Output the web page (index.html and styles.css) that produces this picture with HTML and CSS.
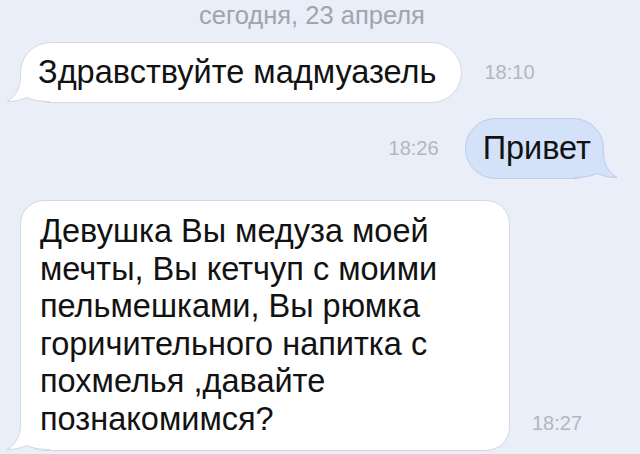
FILE: index.html
```html
<!DOCTYPE html>
<html>
  <head>
    <title>
      Сообщения
    </title>

    <link rel="stylesheet" href="styles.css">

  </head>

  <body>
    <div class="chat">
      <p class="date">сегодня, 23 апреля</p>

      <div class="row row-in">
        <div class="bubble bubble-in">
          <svg class="tail tail-in" width="46" height="27" viewBox="0 0 46 27">
            <path class="tail-fill" d="M14.5 0 C14.5 12 10 20 1 25.5 C8 25.8 15 24 21 21.5 C26 24 34 25.5 44 25.5 L44 0 Z"/>
            <path class="tail-line" d="M14.5 0 C14.5 12 10 20 1 25.5 C8 25.8 15 24 21 21.5 C26 24 34 25.5 44 25.5"/>
          </svg>
          <span class="bubble-text">Здравствуйте мадмуазель</span>
        </div>
        <span class="time">18:10</span>
      </div>

      <div class="row row-out">
        <span class="time">18:26</span>
        <div class="bubble bubble-out">
          <svg class="tail tail-out" width="46" height="27" viewBox="0 0 46 27">
            <path class="tail-fill" d="M14.5 0 C14.5 12 10 20 1 25.5 C8 25.8 15 24 21 21.5 C26 24 34 25.5 44 25.5 L44 0 Z"/>
            <path class="tail-line" d="M14.5 0 C14.5 12 10 20 1 25.5 C8 25.8 15 24 21 21.5 C26 24 34 25.5 44 25.5"/>
          </svg>
          <span class="bubble-text">Привет</span>
        </div>
      </div>

      <div class="row row-in row-long">
        <div class="bubble bubble-in bubble-long">
          <svg class="tail tail-in" width="46" height="27" viewBox="0 0 46 27">
            <path class="tail-fill" d="M14.5 0 C14.5 12 10 20 1 25.5 C8 25.8 15 24 21 21.5 C26 24 34 25.5 44 25.5 L44 0 Z"/>
            <path class="tail-line" d="M14.5 0 C14.5 12 10 20 1 25.5 C8 25.8 15 24 21 21.5 C26 24 34 25.5 44 25.5"/>
          </svg>
          <span class="bubble-text">
            Девушка Вы медуза моей<br>
            мечты, Вы кетчуп с моими<br>
            пельмешками, Вы рюмка<br>
            горичительного напитка с<br>
            похмелья ,давайте<br>
            познакомимся?
          </span>
        </div>
        <span class="time time-bottom">18:27</span>
      </div>
    </div>
  </body>
</html>
```

FILE: styles.css
```css
body {
  margin: 0;
  height: 454px;
  overflow: hidden;
  background-color: #e9eef8;
  font-family: "Liberation Sans", Arial, sans-serif;
  color: #121212;
}

.chat {
  display: flex;
  flex-direction: column;
  padding: 0 36px 0 20px;
}

.date {
  margin: 0 0 12px 0;
  font-size: 25.5px;
  line-height: 30px;
  text-align: center;
  color: #a0a4ac;
}

.row {
  display: flex;
  flex-direction: row;
  align-items: center;
  gap: 22px;
}

.row-out {
  justify-content: flex-end;
  margin-top: 15px;
  gap: 26px;
}

.row-long {
  margin-top: 21px;
  align-items: flex-end;
}

.bubble {
  position: relative;
  font-size: 32.5px;
  line-height: 37px;
  padding: 11px 25px 11px 17px;
  border: 1px solid #d3d8e1;
  border-radius: 31px;
}

/* text sits above the tail drawing */
.bubble-text {
  position: relative;
}

.bubble-in {
  background-color: #ffffff;
}

.bubble-out {
  background-color: #d3e2f8;
  border-color: #bccde8;
  padding: 11px 12px 11px 17px;
}

.bubble-long {
  width: 490px;
  box-sizing: border-box;
  line-height: 37.5px;
  padding: 12px 20px 12px 19px;
  border-radius: 24px;
}

/* little curled tail at the bottom corner */
.tail {
  position: absolute;
  bottom: -1px;
}

.tail-in {
  left: -15px;
}

.tail-out {
  right: -15px;
  transform: scaleX(-1);
}

.tail-fill {
  fill: #ffffff;
}

.tail-line {
  fill: none;
  stroke: #d3d8e1;
  stroke-width: 1;
}

.tail-out .tail-fill {
  fill: #d3e2f8;
}

.tail-out .tail-line {
  stroke: #bccde8;
}

.time {
  font-size: 20px;
  color: #b3b7be;
}

.time-bottom {
  margin-bottom: 16px;
}
```
